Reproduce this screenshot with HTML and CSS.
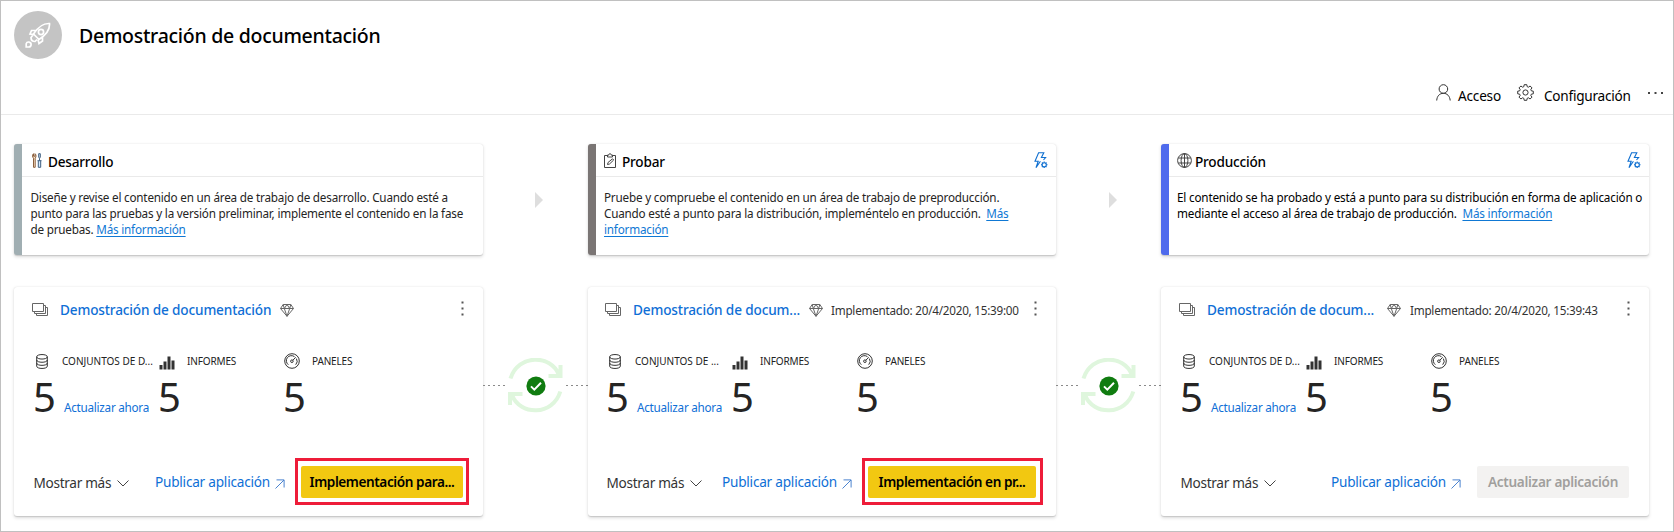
FILE: index.html
```html
<!DOCTYPE html>
<html lang="es">
<head>
<meta charset="utf-8">
<title>Demostración de documentación</title>
<link rel="stylesheet" href="styles.css">
</head>
<body>
<svg class="sprite" aria-hidden="true">
  <symbol id="stack" viewBox="0 0 16 14"><path d="M.5.5h11v8H.5zM11.5 2.500h2v8h-11v-2M13.500 4.500h2v8h-11v-2"/></symbol>
  <symbol id="gem" viewBox="0 0 14 13"><path d="M3.200.5h7.600L13.500 4.500 7 12.300.5 4.500zM.5 4.500h13M7 .5 4.300 4.500 7 12.300l2.700-7.800zM3.200.5l1.100 4M10.800.5l-1.100 4"/></symbol>
  <symbol id="kebab" viewBox="0 0 3 15"><path d="M.5.500h2v2h-2zM.5 6.500h2v2h-2zM.5 12.500h2v2h-2z"/></symbol>
  <symbol id="db" viewBox="0 0 12 15"><path d="M.7 2.800c0-3 10.600-3 10.600 0s-10.600 3-10.600 0v9.400c0 3 10.600 3 10.600 0V2.800M.7 6c0 3 10.600 3 10.600 0M.7 9.100c0 3 10.600 3 10.600 0"/></symbol>
  <symbol id="bars" viewBox="0 0 16 14"><path d="M.5 9h3v4.500h-3zM4.500 5.500h3v8h-3zM8.500.5h3v13h-3zM12.500 4.500h3v9h-3z"/></symbol>
  <symbol id="gauge" viewBox="0 0 16 16"><circle cx="8" cy="8" r="7.300"/><path d="M4.300 11.700A5 5 0 0 1 10.500 3.700M12.400 5.600a5 5 0 0 1-.7 6.100M8.800 7.300l2.900-3"/><circle cx="7.900" cy="8.200" r="1.300"/></symbol>
  <symbol id="chev" viewBox="0 0 12 7"><path d="M.5.500 6 6 11.500.500"/></symbol>
  <symbol id="arrow" viewBox="0 0 10 10"><path d="M1.500.900h7.600v7.600M9 1 .5 9.500"/></symbol>
  <symbol id="bolt" viewBox="0 0 14 17"><path d="M6.400 9.300 2 15.800l2.200-6.500H1L4.600.7h5.200L7.400 5.500h4.200L9.500 8"/><circle cx="10.200" cy="12.800" r="2.100"/><path d="M10.200 9.500v1.200M10.200 14.900v1.200M7 12.800h1.100M12.300 12.800h1.200M7.900 10.500l.8.800M11.700 14.300l.8.800M12.500 10.500l-.8.800M8.700 14.300l-.8.800"/></symbol>
  <symbol id="cycle" viewBox="0 0 55 55"><path d="M2.500 20.500C10-4 43-4 51 17M52.500 7v11H40.500M52.300 33.500C45 58 12 58 4 37M2 47V36h12.500"/></symbol>
  <symbol id="check" viewBox="0 0 20 20"><circle cx="10" cy="10" r="9.600"/><path d="M5 10.400l3.300 3.200 6.700-6.900"/></symbol>
</svg>

<div class="page">
  <header class="head">
    <span class="avatar">
      <svg width="26" height="26" viewBox="0 0 26 26"><path d="M24.500 1.500c-6-.3-10.500 2-16 10.500l5.500 5.500c8-5 11-10 10.500-16zM11 8.500H6.500L5 12l4 .5M17.500 15v4L14 21.500 13 17.500M8 13l-2 2.500c0 2.500 1.500 4 4 4l2-2"/><circle cx="16" cy="10" r="2.600"/><path d="M1.200 25v-3.200a2.500 2.500 0 1 1 2.600 3.200z"/></svg>
    </span>
    <h1 class="title">Demostración de documentación</h1>
  </header>

  <nav class="toolbar">
    <svg class="tool-ico" width="15" height="17" viewBox="0 0 15 17"><circle cx="7.400" cy="5" r="4.300"/><path d="M.7 16.500c.3-4.500 3-7.200 6.700-7.200s6.400 2.700 6.800 7.200"/></svg>
    <span class="tool access">Acceso</span>
    <svg class="tool-ico" width="17" height="17" viewBox="0 0 17 17"><path d="M7.200.700h2.600l.4 2 1.200.5 1.700-1.200 1.900 1.900-1.200 1.700.5 1.200 2 .4v2.600l-2 .4-.5 1.200L15 13.100 13.100 15l-1.700-1.200-1.200.5-.4 2H7.200l-.4-2-1.200-.5L3.900 15 2 13.100l1.200-1.700-.5-1.200-2-.4V7.200l2-.4.5-1.200L2 3.900 3.900 2l1.700 1.200 1.200-.5z"/><circle cx="8.500" cy="8.500" r="2.600"/></svg>
    <span class="tool config">Configuración</span>
    <svg class="tool-dots" width="15" height="2" viewBox="0 0 15 2"><path d="M0 0h2v2H0zM6.500 0h2v2h-2zM13 0h2v2h-2z"/></svg>
  </nav>

  <main class="board">
    <section class="stage dev">
      <div class="stage-head">
        <svg class="ico" width="10" height="15" viewBox="0 0 10 15"><path class="c-orange" d="M1.500 9.500V5.200C.2 4 .2 1.700 1.500.700v2.500h1.500V.700C4.300 1.700 4.300 4 3.200 5.200v9.100H1.500V9"/><path class="c-blue" d="M6.700.700h1.600v3.500l-.8 1-.8-1zM7.500 5.200v2.500M5.500 7.700h4M6.300 7.700v6.600h2.400V7.700"/></svg>
        <h2 class="stage-name">Desarrollo</h2>
      </div>
      <p class="stage-text">Diseñe y revise el contenido en un área de trabajo de desarrollo. Cuando esté a<br>punto para las pruebas y la versión preliminar, implemente el contenido en la fase<br>de pruebas. <a class="more">Más información</a></p>
    </section>
    <div class="next"><span class="tri"></span></div>
    <section class="stage test">
      <div class="stage-head">
        <svg class="ico" width="12" height="15" viewBox="0 0 12 15"><path d="M3.500 2.500h-3v12h11v-12h-3M3.500 4V2h1.500c0-2 2-2 2 0h1.500v2zM3.500 11.500l.5-2 4.500-3.700 1.200 1.200-4.200 4z"/></svg>
        <h2 class="stage-name">Probar</h2>
        <svg class="auto" width="14" height="17"><use href="#bolt"/></svg>
      </div>
      <p class="stage-text">Pruebe y compruebe el contenido en un área de trabajo de preproducción.<br>Cuando esté a punto para la distribución, impleméntelo en producción.&nbsp; <a class="more">Más<br>información</a></p>
    </section>
    <div class="next second"><span class="tri"></span></div>
    <section class="stage prod">
      <div class="stage-head">
        <svg class="ico" width="15" height="15" viewBox="0 0 15 15"><circle cx="7.500" cy="7.500" r="6.900"/><ellipse cx="7.500" cy="7.500" rx="3.400" ry="6.900"/><path d="M1.300 5h12.400M1.300 10h12.400M7.500.6v13.800"/></svg>
        <h2 class="stage-name">Producción</h2>
        <svg class="auto" width="14" height="17"><use href="#bolt"/></svg>
      </div>
      <p class="stage-text">El contenido se ha probado y está a punto para su distribución en forma de aplicación o<br>mediante el acceso al área de trabajo de producción.&nbsp; <a class="more">Más información</a></p>
    </section>

    <article class="card dev-card">
      <div class="card-head">
        <svg class="stack" width="16" height="14"><use href="#stack"/></svg>
        <a class="name">Demostración de documentación</a>
        <svg class="gem" width="14" height="13"><use href="#gem"/></svg>
        <svg class="kebab" width="3" height="15"><use href="#kebab"/></svg>
      </div>
      <div class="stats">
        <div class="stat"><div class="label"><svg class="ico" width="12" height="15"><use href="#db"/></svg><span>CONJUNTOS DE D...</span></div><div class="value"><b>5</b><a class="refresh">Actualizar ahora</a></div></div>
        <div class="stat"><div class="label"><svg class="ico fill" width="16" height="14"><use href="#bars"/></svg><span>INFORMES</span></div><div class="value"><b>5</b></div></div>
        <div class="stat"><div class="label"><svg class="ico" width="16" height="16"><use href="#gauge"/></svg><span>PANELES</span></div><div class="value"><b>5</b></div></div>
      </div>
      <div class="foot">
        <span class="show">Mostrar más</span><svg class="chev" width="12" height="7"><use href="#chev"/></svg>
        <a class="publish">Publicar aplicación</a><svg class="out" width="10" height="10"><use href="#arrow"/></svg>
        <button class="deploy marked w1">Implementación para...</button>
      </div>
    </article>
    <div class="link"><i class="dash"></i><span class="sync"><svg class="cycle" width="55" height="55"><use href="#cycle"/></svg><svg class="check" width="20" height="20"><use href="#check"/></svg></span><i class="dash"></i></div>
    <article class="card test-card">
      <div class="card-head">
        <svg class="stack" width="16" height="14"><use href="#stack"/></svg>
        <a class="name short">Demostración de docum...</a>
        <svg class="gem" width="14" height="13"><use href="#gem"/></svg>
        <span class="when">Implementado: 20/4/2020, 15:39:00</span>
        <svg class="kebab" width="3" height="15"><use href="#kebab"/></svg>
      </div>
      <div class="stats">
        <div class="stat"><div class="label"><svg class="ico" width="12" height="15"><use href="#db"/></svg><span>CONJUNTOS DE ...</span></div><div class="value"><b>5</b><a class="refresh">Actualizar ahora</a></div></div>
        <div class="stat"><div class="label"><svg class="ico fill" width="16" height="14"><use href="#bars"/></svg><span>INFORMES</span></div><div class="value"><b>5</b></div></div>
        <div class="stat"><div class="label"><svg class="ico" width="16" height="16"><use href="#gauge"/></svg><span>PANELES</span></div><div class="value"><b>5</b></div></div>
      </div>
      <div class="foot">
        <span class="show">Mostrar más</span><svg class="chev" width="12" height="7"><use href="#chev"/></svg>
        <a class="publish">Publicar aplicación</a><svg class="out" width="10" height="10"><use href="#arrow"/></svg>
        <button class="deploy marked w2">Implementación en pr...</button>
      </div>
    </article>
    <div class="link"><i class="dash"></i><span class="sync"><svg class="cycle" width="55" height="55"><use href="#cycle"/></svg><svg class="check" width="20" height="20"><use href="#check"/></svg></span><i class="dash"></i></div>
    <article class="card prod-card">
      <div class="card-head">
        <svg class="stack" width="16" height="14"><use href="#stack"/></svg>
        <a class="name short">Demostración de docum...</a>
        <svg class="gem" width="14" height="13"><use href="#gem"/></svg>
        <span class="when">Implementado: 20/4/2020, 15:39:43</span>
        <svg class="kebab" width="3" height="15"><use href="#kebab"/></svg>
      </div>
      <div class="stats">
        <div class="stat"><div class="label"><svg class="ico" width="12" height="15"><use href="#db"/></svg><span>CONJUNTOS DE D...</span></div><div class="value"><b>5</b><a class="refresh">Actualizar ahora</a></div></div>
        <div class="stat"><div class="label"><svg class="ico fill" width="16" height="14"><use href="#bars"/></svg><span>INFORMES</span></div><div class="value"><b>5</b></div></div>
        <div class="stat"><div class="label"><svg class="ico" width="16" height="16"><use href="#gauge"/></svg><span>PANELES</span></div><div class="value"><b>5</b></div></div>
      </div>
      <div class="foot">
        <span class="show">Mostrar más</span><svg class="chev" width="12" height="7"><use href="#chev"/></svg>
        <a class="publish">Publicar aplicación</a><svg class="out" width="10" height="10"><use href="#arrow"/></svg>
        <button class="deploy off w3" disabled>Actualizar aplicación</button>
      </div>
    </article>
  </main>
</div>
</body>
</html>
```
FILE: styles.css
```css
* { box-sizing: border-box; }
body { margin: 0; font-family: "Noto Sans", "Open Sans", sans-serif; color: #000; background: #fff; }
h1, h2, p { margin: 0; }
svg { display: block; flex: none; fill: none; stroke: #444; stroke-width: 1; }
.sprite { position: absolute; width: 0; height: 0; }
.page { width: 1674px; height: 532px; border: 1px solid #c0c0c0; overflow: hidden; }

.head { display: flex; align-items: center; height: 68px; margin-bottom: 2px; padding-left: 13px; }
.avatar { display: flex; align-items: center; justify-content: center; width: 48px; height: 48px; margin-right: 17px; border-radius: 50%; background: #c4c4c4; }
.avatar svg { stroke: #fff; stroke-width: 1.7; }
.title { padding-top: 2px; font-size: 19.5px; line-height: 28px; font-weight: 500; letter-spacing: -0.28px; white-space: nowrap; }

.toolbar { display: flex; align-items: center; justify-content: flex-end; height: 44px; padding-right: 10px; border-bottom: 1px solid #eaeaea; }
.tool-ico { margin-right: 7px; stroke: #333; }
.tool { font-size: 13.6px; line-height: 20px; white-space: nowrap; padding-top: 6px; }
.access { letter-spacing: -0.2px; width: 43px; margin-right: 16px; }
.config { letter-spacing: -0.24px; width: 86px; margin: 0 18px 0 3px; }
.tool-dots { fill: #444; stroke: none; }

.board { display: grid; grid-template-columns: 469px 105px 468px 105px 488px; grid-template-rows: 111px 229px; row-gap: 32px; padding: 29px 0 0 13px; }
.stage, .card { background: #fff; border-radius: 3px; box-shadow: 0 1.600px 3.600px rgba(0,0,0,.14), 0 .3px 1px rgba(0,0,0,.12); }
.stage { border-left: 8px solid #a0aeb2; }
.test { border-left-color: #7a7574; }
.prod { border-left-color: #4f6bed; }
.stage-head { display: flex; align-items: center; height: 33px; padding: 0 8px 0 10px; border-bottom: 1px solid #eaeaea; }
.stage-head svg { stroke: #444; }
.stage-head .c-orange { stroke: #8a5f3d; fill: #fbe3c9; }
.stage-head .c-blue { stroke: #3f5f80; fill: #d3e8fb; }
.stage-name { margin-left: 6px; padding-top: 3px; font-size: 13.6px; line-height: 20px; font-weight: 500; letter-spacing: -0.2px; }
.test .stage-head, .prod .stage-head { padding-left: 8px; }
.prod .stage-name { margin-left: 3px; }
.stage-head .auto { margin-left: auto; stroke: #0f6fd0; stroke-width: 1.1; }
.stage-text { padding: 12px 0 0 8.500px; font-size: 11.7px; line-height: 16px; letter-spacing: -0.2px; white-space: nowrap; color: #252423; }
.test .stage-text { padding-left: 8px; }
.prod .stage-text { padding-left: 8px; color: #000; letter-spacing: -0.175px; }
.more { color: #0f78d4; text-decoration: underline; text-underline-offset: 2px; text-decoration-thickness: 1px; }
.next { display: flex; padding: 48px 0 0 52px; }
.second { padding-left: 53px; }
.tri { width: 0; height: 0; border: 8px solid transparent; border-left-color: #dedede; border-right-width: 0; }

.card { padding: 13px 20px 0 18px; }
.card-head { display: flex; align-items: center; height: 20px; }
.stack, .gem { stroke: #666; }
.name { margin-left: 12px; font-size: 13.6px; line-height: 20px; font-weight: 500; letter-spacing: -0.15px; color: #0f6fd6; white-space: nowrap; width: 211px; }
.short { width: 167px; letter-spacing: -0.14px; }
.gem { margin-left: 9px; }
.when { margin-left: 8px; font-size: 11.7px; line-height: 20px; letter-spacing: -0.24px; color: #333; white-space: nowrap; }
.prod-card .gem { margin-left: 13px; }
.prod-card .when { margin-left: 9px; }
.kebab { margin: -3px -1px 0 auto; fill: #555; stroke: none; }
.stats { display: grid; grid-template-columns: repeat(3, 125px); margin: 33px 0 0 4px; }
.label { display: flex; align-items: center; height: 16px; font-size: 10px; line-height: 16px; letter-spacing: 0; white-space: nowrap; color: #222; }
.label .ico { stroke: #333; }
.label .fill { fill: #333; stroke: none; margin-top: 3px; }
.label span { margin-left: 14px; }
.stat + .stat .ico { margin-left: -2px; }
.stat + .stat .label span { margin-left: 12px; letter-spacing: -0.15px; }
.value { display: flex; align-items: baseline; height: 48px; line-height: 56px; }
.value b { width: 29px; font-size: 40px; line-height: 56px; font-weight: 400; margin-left: -3px; color: #252423; }
.refresh { margin-left: 2px; font-size: 11.7px; letter-spacing: -0.25px; color: #0f6fd6; white-space: nowrap; }
.foot { display: flex; align-items: center; height: 32px; margin-top: 49px; font-size: 13.6px; line-height: 20px; white-space: nowrap; }
.show { margin-left: 1.500px; padding-top: 2px; letter-spacing: -0.3px; width: 78px; color: #333; }
.chev { margin-left: 5px; margin-top: 3px; }
.publish { margin-left: auto; width: 114px; letter-spacing: -0.22px; color: #0f6fd6; }
.out { margin: 4px 16px 0 6px; stroke: #4b83cf; }
.deploy { position: relative; height: 32px; padding: 0; border: 0; border-radius: 2px; background: #f2c811; color: #000; font: 600 13.6px/32px "Noto Sans", sans-serif; letter-spacing: -0.42px; white-space: nowrap; }
.w1 { width: 162px; }
.w2 { width: 168px; }
.w3 { width: 152px; }
.off { background: #f3f2f1; color: #a19f9d; letter-spacing: -0.3px; }
.marked::after { content: ""; position: absolute; inset: -8px -6px -7px; border: 3px solid #ee1c39; }
.w2::after { right: -7px; }
.test-card .stack { margin-left: -1px; }
.test-card .stats { margin-left: 3px; }
.test-card .show { margin-left: .5px; }

.link { display: flex; align-items: center; height: 55px; margin-top: 71px; gap: 3px; }
.dash { width: 22px; height: 1px; background: repeating-linear-gradient(90deg, #8a8a8a 0 2px, transparent 2px 5px); }
.sync { display: grid; flex: none; place-items: center; width: 55px; }
.cycle, .check { grid-area: 1 / 1; }
.cycle { stroke: #dff6dd; stroke-width: 4; }
.check { fill: #107c10; stroke: none; }
#check path { fill: none; stroke: #fff; stroke-width: 2; }
```
